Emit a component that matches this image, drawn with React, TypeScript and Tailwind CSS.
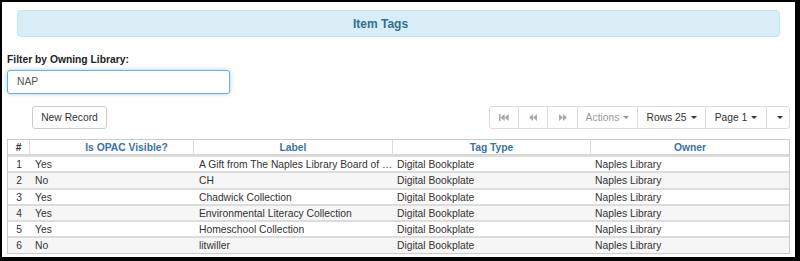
const rows = [
  { n: 1, opac: "Yes", label: "A Gift from The Naples Library Board of …", type: "Digital Bookplate", owner: "Naples Library" },
  { n: 2, opac: "No", label: "CH", type: "Digital Bookplate", owner: "Naples Library" },
  { n: 3, opac: "Yes", label: "Chadwick Collection", type: "Digital Bookplate", owner: "Naples Library" },
  { n: 4, opac: "Yes", label: "Environmental Literacy Collection", type: "Digital Bookplate", owner: "Naples Library" },
  { n: 5, opac: "Yes", label: "Homeschool Collection", type: "Digital Bookplate", owner: "Naples Library" },
  { n: 6, opac: "No", label: "litwiller", type: "Digital Bookplate", owner: "Naples Library" },
];

function Caret() {
  return <span className="inline-block w-0 h-0 ml-[4px] border-x-[3px] border-x-transparent border-t-[3px] border-t-current align-middle" />;
}

function FastBackward() {
  return (
    <svg width="10" height="7" viewBox="0 0 10 7" fill="currentColor">
      <rect x="0" y="0" width="1.6" height="7" />
      <polygon points="1.6,3.5 5.6,0 5.6,7" />
      <polygon points="5.6,3.5 9.6,0 9.6,7" />
    </svg>
  );
}

function Backward() {
  return (
    <svg width="8" height="7" viewBox="0 0 8 7" fill="currentColor">
      <polygon points="0,3.5 4,0 4,7" />
      <polygon points="4,3.5 8,0 8,7" />
    </svg>
  );
}

function Forward() {
  return (
    <svg width="8" height="7" viewBox="0 0 8 7" fill="currentColor">
      <polygon points="8,3.5 4,0 4,7" />
      <polygon points="4,3.5 0,0 0,7" />
    </svg>
  );
}

const grid = "grid grid-cols-[22px_164px_199px_198px_198px]";

export default function App() {
  return (
    <div
      className="w-[800px] h-[261px] bg-black pl-[2px] pt-[2px] pr-[5px] pb-[4px] text-[10.3px] text-[#333]"
      style={{ fontFamily: '"Liberation Sans", Arial, sans-serif' }}
    >
      <div className="h-full bg-white px-[5px] pt-[8px]">
        <div className="mx-[10px] h-[27px] flex items-center justify-center pr-[36px] bg-[#d9edf7] border border-[#bce8f1] rounded-[4px]">
          <span className="text-[12px] font-bold text-[#31708f]">Item Tags</span>
        </div>

        <div className="mt-[16px] font-bold text-[#222] leading-[13px]">Filter by Owning Library:</div>
        <div className="mt-[4px] w-[223px] h-[24px] flex items-center pl-[9px] border border-[#66afe9] rounded-[3px] shadow-[0_0_4px_rgba(102,175,233,0.6)] text-[#555]">
          NAP
        </div>

        <div className="mt-[12px] flex items-center justify-between h-[23px]">
          <button className="ml-[25px] w-[75px] h-[23px] border border-[#ccc] rounded-[3px] bg-white text-[#333]">
            New Record
          </button>
          <div className="flex h-[23px] border border-[#ddd] rounded-[3px] bg-white">
            <div className="w-[28px] flex items-center justify-center text-[#aaa]"><FastBackward /></div>
            <div className="w-[29px] flex items-center justify-center text-[#aaa] border-l border-[#ddd]"><Backward /></div>
            <div className="w-[30px] flex items-center justify-center text-[#aaa] border-l border-[#ddd]"><Forward /></div>
            <div className="w-[60px] flex items-center justify-center text-[#999] border-l border-[#ddd]">Actions<Caret /></div>
            <div className="w-[68px] flex items-center justify-center text-[#333] border-l border-[#ddd]">Rows 25<Caret /></div>
            <div className="w-[61px] flex items-center justify-center text-[#333] border-l border-[#ddd]">Page 1<Caret /></div>
            <div className="w-[23px] flex items-center justify-center text-[#333] border-l border-[#ddd]"><Caret /></div>
          </div>
        </div>

        <div className="mt-[10px] border border-[#ccc]">
          <div className={`${grid} h-[15px] border-b border-[#d4d4d4] font-bold text-[#3a72ad]`}>
            <div className="flex items-center justify-center border-r border-[#ddd] text-[#333]">#</div>
            <div className="flex items-center justify-center pl-[30px] border-r border-[#ddd]">Is OPAC Visible?</div>
            <div className="flex items-center justify-center border-r border-[#ddd]">Label</div>
            <div className="flex items-center justify-center border-r border-[#ddd]">Tag Type</div>
            <div className="flex items-center justify-center">Owner</div>
          </div>
          {rows.map((r, i) => (
            <div
              key={r.n}
              className={`${grid} h-[16.3px] items-center border-t-2 border-[#dcdcdc] ${i % 2 === 1 ? "bg-[#f6f6f6]" : "bg-white"} ${i === 0 ? "border-t-0" : ""}`}
            >
              <div className="text-center">{r.n}</div>
              <div className="pl-[5px]">{r.opac}</div>
              <div className="pl-[5px] whitespace-nowrap">{r.label}</div>
              <div className="pl-[4px]">{r.type}</div>
              <div className="pl-[4px]">{r.owner}</div>
            </div>
          ))}
        </div>
      </div>
    </div>
  );
}
